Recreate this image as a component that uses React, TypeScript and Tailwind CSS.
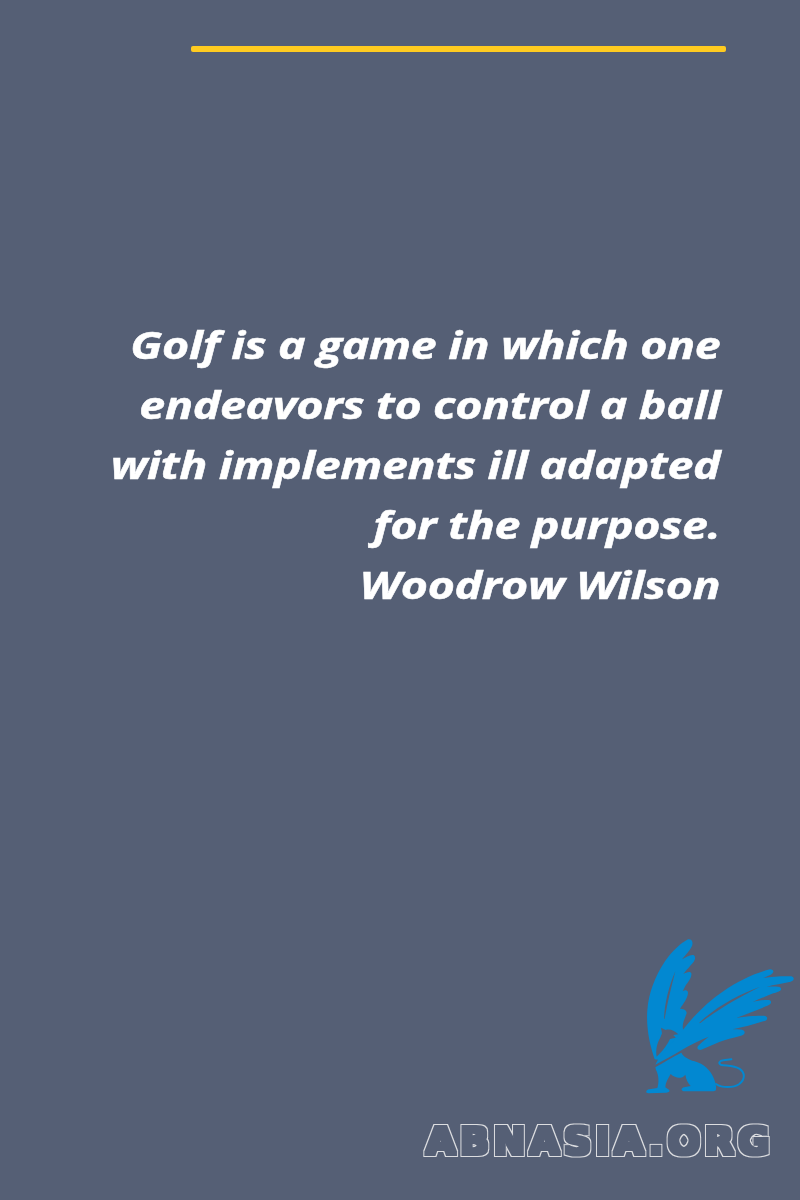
const quoteLines = [
  "Golf is a game in which one",
  "endeavors to control a ball",
  "with implements ill adapted",
  "for the purpose.",
  "Woodrow Wilson",
];

function GriffinLogo() {
  return (
    <svg viewBox="0 0 540 510" className="block w-[180px] h-[170px]" fill="#0288d1">
      {/* left wing */}
      <path d="M104 388 C88 340 78 290 82 240 C86 190 104 140 136 92 C158 62 182 40 204 28 C216 26 222 38 214 52 C208 64 196 76 186 88 C198 82 212 72 222 76 C230 84 222 96 212 106 C204 116 196 124 190 132 C198 128 210 122 214 130 C216 142 204 156 196 168 L188 184 C194 180 204 178 204 190 C202 206 190 222 180 236 C188 236 200 238 200 250 C194 268 184 284 190 300 L180 350 L118 390 Z" />
      {/* right wing */}
      <path d="M112 392 C142 352 166 326 190 298 C220 258 262 216 312 182 C356 152 404 130 450 118 C462 118 464 128 452 134 L430 144 C456 140 488 138 514 139 C524 142 524 152 512 155 C488 160 462 164 440 170 C454 170 476 168 482 173 C488 182 474 186 460 190 C440 198 420 206 398 216 C416 212 440 208 450 211 C458 218 450 226 438 229 C412 240 384 250 350 263 C376 260 416 256 436 258 C446 262 442 272 430 274 C400 284 370 292 338 298 C350 298 366 298 372 302 C378 310 370 316 360 318 C338 324 318 328 298 336 C280 344 260 352 242 360 C232 360 228 352 238 344 C246 336 256 328 266 320 C240 330 212 344 184 361 C160 376 130 392 106 404 Z" />
      {/* feather slits */}
      <path d="M132 266 C134 220 146 170 166 124 C154 170 142 220 134 266 Z" fill="#555f75" />
      <path d="M238 278 C290 228 360 192 420 170 C370 196 300 232 240 280 Z" fill="#555f75" />
      {/* head, cut out of the wings */}
      <path d="M123 293 L137 300 C148 296 162 300 175 313 L160 315 L167 323 L150 327 C144 340 132 358 120 370 L110 380 C106 360 112 338 120 325 L126 310 Z" fill="#555f75" />
      {/* body, legs */}
      <path d="M106 412 C130 398 160 380 184 368 C190 380 204 388 224 394 C252 402 270 420 280 442 C286 456 290 470 288 478 C288 484 280 484 270 484 L194 484 C184 484 180 476 192 472 L212 468 C204 460 198 448 196 434 C184 448 168 446 152 432 C144 446 136 458 136 472 L148 480 C150 486 144 488 136 488 L86 490 C76 490 76 480 88 478 L112 474 C118 456 116 434 108 420 Z" />
      {/* tail */}
      <path
        d="M288 462 C306 474 340 474 358 462 C376 448 376 428 358 416 C340 406 316 408 302 404 C294 400 298 392 310 391 L334 388"
        fill="none"
        stroke="#0288d1"
        strokeWidth="6"
        strokeLinecap="round"
      />
    </svg>
  );
}

// thickens the wordmark and keeps only a thin outline around it
function OutlineFilter() {
  return (
    <svg width="0" height="0" className="absolute">
      <filter id="wordmark-outline" x="-5%" y="-20%" width="110%" height="140%">
        <feMorphology in="SourceAlpha" operator="dilate" radius="2" result="inner" />
        <feMorphology in="inner" operator="dilate" radius="1" result="outer" />
        <feComposite in="outer" in2="inner" operator="out" result="ring" />
        <feFlood floodColor="#dcdde0" />
        <feComposite in2="ring" operator="in" />
      </filter>
    </svg>
  );
}

export default function App() {
  return (
    <div className="h-[1200px] bg-[#555f75] flex flex-col overflow-hidden">
      <div className="mt-[46px] ml-[191px] w-[535px] h-[6px] rounded-[2px] bg-[#ffcb20]" />

      <div className="mt-[262px] pr-[65px] origin-right scale-x-[1.225] text-right text-white text-[38px] leading-[60px] font-bold italic tracking-[-0.3px] [-webkit-text-stroke:0.5px_white] font-['Open_Sans',sans-serif]">
        {quoteLines.map((line) => (
          <div key={line}>{line}</div>
        ))}
      </div>

      <div className="mt-[316px] self-end">
        <GriffinLogo />
      </div>

      <OutlineFilter />
      <div className="mt-[11px] pr-[26px] self-end text-[38px] leading-[60px] font-bold tracking-[4.5px] text-white [filter:url(#wordmark-outline)] font-['DejaVu_Sans',sans-serif]">
        ABNASIA.ORG
      </div>
    </div>
  );
}
